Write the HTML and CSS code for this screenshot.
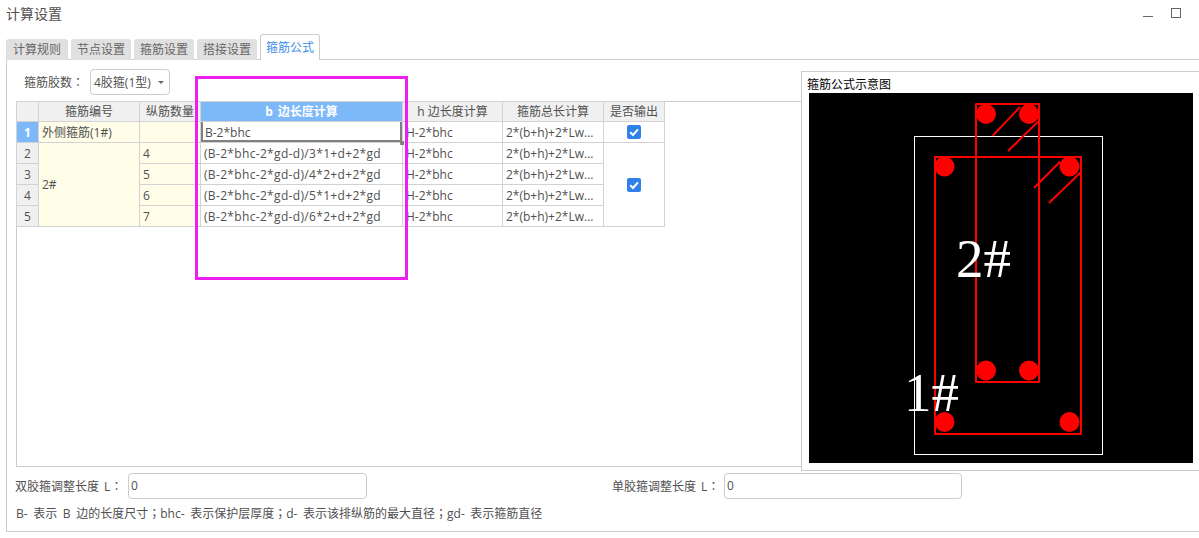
FILE: index.html
```html
<!DOCTYPE html>
<html lang="zh-CN">
<head>
<meta charset="utf-8">
<title>计算设置</title>
<link rel="stylesheet" href="styles.css">
</head>
<body>
<div class="window">
  <header class="titlebar">
    <span class="title">计算设置</span>
    <div class="winbtns">
      <span class="win-min"></span>
      <span class="win-max"></span>
    </div>
  </header>
  <nav class="tabs">
    <span class="tab tab-first">计算规则</span>
    <span class="tab">节点设置</span>
    <span class="tab">箍筋设置</span>
    <span class="tab">搭接设置</span>
    <span class="tab tab-active">箍筋公式</span>
  </nav>
  <main class="content">
    <div class="toolbar">
      <span class="tool-label">箍筋胶数<span class="punc" lang="zh-TW">：</span></span>
      <div class="select"><span>4胶箍(1型)</span><i class="caret"></i></div>
    </div>
    <div class="grid-frame">
      <table class="grid">
        <colgroup>
          <col class="c0"><col class="c1"><col class="c2"><col class="c3"><col class="c4"><col class="c5"><col class="c6">
        </colgroup>
        <thead>
          <tr>
            <th></th><th>箍筋编号</th><th>纵筋数量</th><th class="th-sel">b 边长度计算</th><th>h 边长度计算</th><th>箍筋总长计算</th><th>是否输出</th>
          </tr>
        </thead>
        <tbody>
          <tr>
            <td class="rh rh-sel">1</td><td class="ro">外侧箍筋(1#)</td><td class="ro"></td><td class="cur">B-2*bhc</td><td>H-2*bhc</td><td>2*(b+h)+2*Lw...</td>
            <td class="chk"><span class="checkbox"><svg viewBox="0 0 14 14"><path d="M3.2 7.2 6 10 11 4.4"/></svg></span></td>
          </tr>
          <tr>
            <td class="rh">2</td><td class="ro" rowspan="4">2#</td><td class="ro num">4</td><td class="formula">(B-2*bhc-2*gd-d)/3*1+d+2*gd</td><td>H-2*bhc</td><td>2*(b+h)+2*Lw...</td>
            <td class="chk" rowspan="4"><span class="checkbox"><svg viewBox="0 0 14 14"><path d="M3.2 7.2 6 10 11 4.4"/></svg></span></td>
          </tr>
          <tr>
            <td class="rh">3</td><td class="ro num">5</td><td class="formula">(B-2*bhc-2*gd-d)/4*2+d+2*gd</td><td>H-2*bhc</td><td>2*(b+h)+2*Lw...</td>
          </tr>
          <tr>
            <td class="rh">4</td><td class="ro num">6</td><td class="formula">(B-2*bhc-2*gd-d)/5*1+d+2*gd</td><td>H-2*bhc</td><td>2*(b+h)+2*Lw...</td>
          </tr>
          <tr>
            <td class="rh">5</td><td class="ro num">7</td><td class="formula">(B-2*bhc-2*gd-d)/6*2+d+2*gd</td><td>H-2*bhc</td><td>2*(b+h)+2*Lw...</td>
          </tr>
        </tbody>
      </table>
    </div>
    <div class="adjust">
      <label class="adj-label">双胶箍调整长度 L<span class="punc" lang="zh-TW">：</span></label>
      <div class="input input-a">0</div>
      <label class="adj-label adj-right">单胶箍调整长度 L<span class="punc" lang="zh-TW">：</span></label>
      <div class="input input-b">0</div>
    </div>
    <p class="legend">B- 表示 B 边的长度尺寸<span class="punc" lang="zh-TW">；</span>bhc- 表示保护层厚度<span class="punc" lang="zh-TW">；</span>d- 表示该排纵筋的最大直径<span class="punc" lang="zh-TW">；</span>gd- 表示箍筋直径</p>

    <div class="highlight"></div>

    <aside class="preview">
      <div class="preview-title">箍筋公式示意图</div>
      <svg class="diagram" viewBox="809 93 384 370">
        <rect class="wline" x="914.5" y="136.5" width="188" height="318"/>
        <rect class="rline" x="935" y="157" width="146" height="277"/>
        <rect class="rline" x="976" y="104" width="63" height="278"/>
        <path class="rline" d="M992.7 135.7 1020 107M1008 151 1038 121.7M1034 188 1060 161.7M1049 203 1081 172"/>
        <circle class="dot" cx="986" cy="114" r="10"/>
        <circle class="dot" cx="1029" cy="114" r="10"/>
        <circle class="dot" cx="944.5" cy="166.5" r="10"/>
        <circle class="dot" cx="1069.5" cy="166.5" r="10"/>
        <circle class="dot" cx="986" cy="370.5" r="10"/>
        <circle class="dot" cx="1029" cy="370.5" r="10"/>
        <circle class="dot" cx="944.5" cy="422" r="10"/>
        <circle class="dot" cx="1069.5" cy="422" r="10"/>
        <text class="dtext" x="956" y="277">2#</text>
        <text class="dtext" x="904" y="411">1#</text>
      </svg>
    </aside>
  </main>
</div>
</body>
</html>
```
FILE: styles.css
```css
* { box-sizing: border-box; }
html, body { margin: 0; padding: 0; background: #fff; }
body {
  width: 1199px;
  height: 538px;
  overflow: hidden;
  font-family: "Open Sans", "Noto Sans CJK SC", sans-serif;
  font-size: 12px;
  color: #505050;
}
.window { width: 1199px; height: 538px; }
.punc { font-family: "Noto Sans CJK TC", sans-serif; }

.titlebar {
  height: 34px;
  padding: 4px 18px 0 6px;
  display: flex;
  justify-content: space-between;
}
.title { font-size: 14px; line-height: 20px; color: #505050; }
.winbtns { display: flex; align-items: flex-start; gap: 18px; padding-top: 4px; }
.win-min { width: 10px; height: 1px; background: #666; margin-top: 8px; }
.win-max { width: 10px; height: 10px; border: 1px solid #666; }

.tabs {
  height: 26px;
  margin-bottom: -1px;
  padding-left: 6px;
  display: flex;
  align-items: flex-end;
  gap: 3px;
  position: relative;
  z-index: 1;
}
.tab {
  width: 60px;
  height: 21px;
  background: #e0e0e0;
  border-radius: 3px 3px 0 0;
  color: #666;
  text-align: center;
  line-height: 21px;
}
.tab-first { width: 62px; }
.tab-active {
  height: 26px;
  background: #fff;
  border: 1px solid #ccc;
  border-bottom: 0;
  color: #3e8ee8;
  line-height: 26px;
}

.content {
  position: relative;
  height: 473px;
  margin-left: 6px;
  border: 1px solid #ccc;
  border-right: 0;
}

.toolbar {
  height: 26px;
  margin-top: 9px;
  padding-left: 17px;
  display: flex;
  align-items: center;
  gap: 6px;
}
.tool-label { width: 60px; white-space: nowrap; }
.select {
  width: 80px;
  height: 26px;
  padding-left: 3px;
  border: 1px solid #ccc;
  border-radius: 4px;
  display: flex;
  align-items: center;
  justify-content: space-between;
}
.caret {
  width: 0;
  height: 0;
  margin-right: 5px;
  border: 3px solid transparent;
  border-top-color: #666;
  border-bottom: 0;
}

.grid-frame {
  height: 366px;
  width: 787px;
  margin: 6px 0 0 9px;
  border: 1px solid #ccc;
}
.grid {
  margin: -1px 0 0 -1px;
  width: 648px;
  table-layout: fixed;
  border-collapse: collapse;
}
.c0 { width: 22px; }
.c1 { width: 101px; }
.c2 { width: 61px; }
.c3 { width: 202px; }
.c4 { width: 100px; }
.c5 { width: 101px; }
.c6 { width: 61px; }
.grid th, .grid td {
  border: 1px solid #d2d2d2;
  padding: 0 3px;
  overflow: hidden;
  white-space: nowrap;
  font-size: 12px;
  font-weight: 400;
  color: #505050;
}
.grid th {
  height: 20px;
  background: #f0f0f0;
  text-align: center;
  line-height: 18px;
}
.grid td { height: 21px; line-height: 19px; text-align: left; }
.grid .th-sel { background: #7db8f8; color: #fff; font-weight: 700; word-spacing: 2px; }
.grid .rh { background: #f0f0f0; text-align: center; padding: 0; }
.grid .rh-sel { background: #7db8f8; color: #fff; font-weight: 700; }
.grid .ro { background: #fffde8; }
.grid .num { padding-left: 3px; }
.grid .chk { text-align: center; padding: 0; }
.grid .formula { letter-spacing: 0.33px; }
.grid .cur {
  position: relative;
  overflow: visible;
  box-shadow: inset 2px 0 #808080, inset -2px 0 #808080, inset 0 -2px #808080;
  padding-left: 4px;
}
.grid .cur::after {
  content: "";
  position: absolute;
  right: -2px;
  bottom: -3px;
  width: 4px;
  height: 4px;
  background: #808080;
}
.checkbox {
  display: block;
  width: 14px;
  height: 14px;
  margin: 0 auto;
  border-radius: 2px;
  background: #2f80e8;
}
.checkbox svg { display: block; width: 14px; height: 14px; }
.checkbox path { fill: none; stroke: #fff; stroke-width: 2; }

.adjust {
  height: 26px;
  margin-top: 6px;
  padding-left: 8px;
  display: flex;
  align-items: center;
}
.adj-label { width: 113px; white-space: nowrap; word-spacing: 2px; }
.adj-right { margin-left: 245px; width: 112px; }
.input {
  height: 26px;
  padding-left: 2px;
  border: 1px solid #ccc;
  border-radius: 4px;
  line-height: 24px;
}
.input-a { width: 239px; }
.input-b { width: 238px; }

.legend {
  margin: 5px 0 0 9px;
  line-height: 18px;
  white-space: nowrap;
  word-spacing: 2.5px;
}

.highlight {
  position: absolute;
  left: 188px;
  top: 16px;
  width: 213px;
  height: 204px;
  border: 3px solid #ee1fee;
  pointer-events: none;
}

.preview {
  position: absolute;
  left: 794px;
  top: 11px;
  width: 398px;
  height: 400px;
  background: #fff;
  border: 1px solid #ccc;
  border-right: 0;
}
.preview-title {
  height: 21px;
  padding-left: 5px;
  line-height: 26px;
  color: #000;
  white-space: nowrap;
}
.diagram {
  display: block;
  width: 384px;
  height: 370px;
  margin-left: 7px;
  background: #000;
}
.wline { fill: none; stroke: #fff; stroke-width: 1; }
.rline { fill: none; stroke: #f00; stroke-width: 2; stroke-linejoin: round; }
.dot { fill: #f00; }
.dtext { fill: #fff; font-family: "Liberation Serif", serif; font-size: 55px; }
```
